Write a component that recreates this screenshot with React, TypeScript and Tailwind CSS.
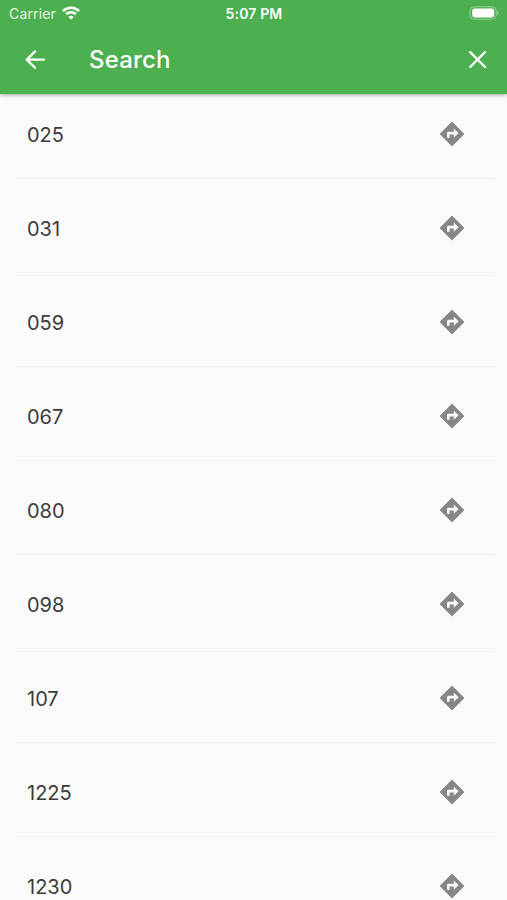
import React from 'react';

const routes = ['025', '031', '059', '067', '080', '098', '107', '1225', '1230'];

const StatusBar: React.FC = () => (
  <div className="grid h-[27px] grid-cols-3 items-center pl-[9px] pr-[8px]">
    <div className="flex items-center gap-[6px]">
      <span className="text-[14px] leading-none tracking-[0.15px] text-white/85">Carrier</span>
      <svg width="18" height="14" viewBox="0 0 18 14" className="-mt-[2px]" fill="none" stroke="white" strokeWidth="2.5">
        <path d="M1 5.1C5.4.6 12.6.6 17 5.1" />
        <path d="M4 8.2c2.8-2.7 7.2-2.7 10 0" />
        <path d="M6.3 10.9c1.4-1.4 4-1.4 5.4 0L9 13.6z" fill="white" stroke="none" />
      </svg>
    </div>
    <span className="pt-px text-center text-[14px] font-semibold leading-none tracking-[0.15px] text-white">5:07 PM</span>
    <svg className="-mt-px justify-self-end" width="30" height="14" viewBox="0 0 30 14">
      <rect x="1" y="0.8" width="26.2" height="12.4" rx="4" fill="none" stroke="white" strokeOpacity="0.4" />
      <rect x="3.2" y="2.6" width="22" height="8.8" rx="2.4" fill="white" />
      <path d="M28.4 4.8c1.6.7 1.6 3.7 0 4.4z" fill="white" fillOpacity="0.5" />
    </svg>
  </div>
);

const Header: React.FC = () => (
  <header className="relative z-10 h-[94px] shrink-0 bg-[#4caf50] shadow-[0_1px_4px_rgba(0,0,0,0.35)]">
    <StatusBar />
    <div className="flex h-[66px] items-center pl-[25px] pr-[20px]">
      <button aria-label="Back">
        <svg width="21" height="20" viewBox="0 0 21 20" fill="none" stroke="white" strokeWidth="2.3" strokeLinecap="round" strokeLinejoin="round">
          <path d="M10 1.4 1.8 9.6l8.2 8.2M1.8 9.6h17.2" />
        </svg>
      </button>
      <h1 className="ml-[43px] flex-1 text-[24px] font-medium leading-none tracking-[0.15px] text-white">Search</h1>
      <button aria-label="Close">
        <svg width="18" height="18" viewBox="0 0 18 18" fill="none" stroke="white" strokeWidth="2.4" strokeLinecap="round">
          <path d="m1.2 1.2 14.8 14.8M16 1.2 1.2 16" />
        </svg>
      </button>
    </div>
  </header>
);

const DirectionsIcon: React.FC = () => (
  <svg width="26" height="26" viewBox="0 0 26 26">
    <path
      d="M13 1.5 24.5 13 13 24.5 1.5 13z"
      fill="#868686"
      stroke="#868686"
      strokeWidth="1.2"
      strokeLinejoin="round"
    />
    <path d="M8 16.7v-4.3c0-1 .6-1.6 1.6-1.6h5.2V7.6l4.8 4.6-4.8 4.6v-3.2h-4.2v3.1z" fill="#fafafa" />
  </svg>
);

export default function App() {
  return (
    <div className="flex h-[900px] w-full flex-col overflow-hidden bg-[#fafafa] font-['Inter',sans-serif]">
      <Header />
      {/* first row is scrolled slightly under the header */}
      <ul className="-mt-[9px] pl-[15px] pr-[12px]">
        {routes.map((route) => (
          <li
            key={route}
            className="flex h-[94px] items-center justify-between border-b border-[#f1f1f1] pl-[12px] pr-[30px] pt-[5px]"
          >
            <span className="pt-px text-[20px] leading-none text-[#3c3c3c]">{route}</span>
            <DirectionsIcon />
          </li>
        ))}
      </ul>
    </div>
  );
}
